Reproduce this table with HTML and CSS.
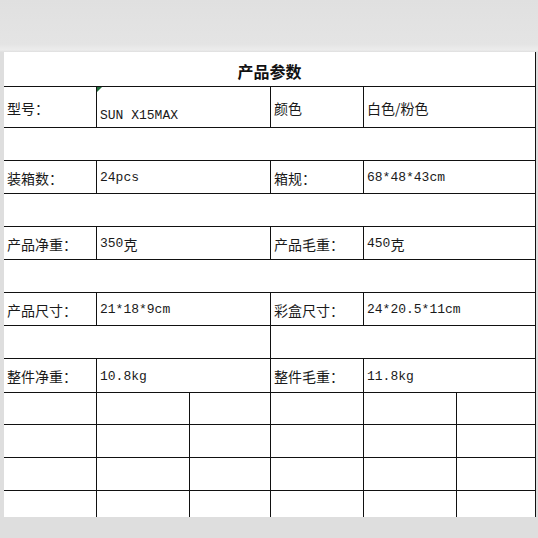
FILE: index.html
```html
<!DOCTYPE html>
<html lang="zh">
<head>
<meta charset="utf-8">
<title>产品参数</title>
<link rel="stylesheet" href="styles.css">
</head>
<body>
<div class="page">
  <div class="sheet">
    <div class="c title s6">产品参数</div>

    <div class="c">型号：</div>
    <div class="c s2 model"><span class="lat">SUN X15MAX</span></div>
    <div class="c">颜色</div>
    <div class="c s2">白色/粉色</div>

    <div class="c s6"></div>

    <div class="c">装箱数：</div>
    <div class="c s2"><span class="lat">24pcs</span></div>
    <div class="c">箱规：</div>
    <div class="c s2"><span class="lat">68*48*43cm</span></div>

    <div class="c s6"></div>

    <div class="c">产品净重：</div>
    <div class="c s2"><span class="lat">350</span>克</div>
    <div class="c">产品毛重：</div>
    <div class="c s2"><span class="lat">450</span>克</div>

    <div class="c s6"></div>

    <div class="c">产品尺寸：</div>
    <div class="c s2"><span class="lat">21*18*9cm</span></div>
    <div class="c">彩盒尺寸：</div>
    <div class="c s2"><span class="lat">24*20.5*11cm</span></div>

    <div class="c s3"></div>
    <div class="c s3"></div>

    <div class="c">整件净重：</div>
    <div class="c s2"><span class="lat">10.8kg</span></div>
    <div class="c">整件毛重：</div>
    <div class="c s2"><span class="lat">11.8kg</span></div>

    <div class="c"></div><div class="c"></div><div class="c"></div><div class="c"></div><div class="c"></div><div class="c"></div>
    <div class="c"></div><div class="c"></div><div class="c"></div><div class="c"></div><div class="c"></div><div class="c"></div>
    <div class="c"></div><div class="c"></div><div class="c"></div><div class="c"></div><div class="c"></div><div class="c"></div>
    <div class="c"></div><div class="c"></div><div class="c"></div><div class="c"></div><div class="c"></div><div class="c"></div>
  </div>
</div>
</body>
</html>
```

FILE: styles.css
```css
html, body {
  margin: 0;
  padding: 0;
}

body {
  width: 538px;
  height: 538px;
  overflow: hidden;
  background: #dedede;
  font-family: "Noto Sans CJK SC", "Liberation Mono", sans-serif;
  color: #1a1a1a;
}

.page {
  padding-top: 52px;
  background: linear-gradient(#e0e0e0 0, #e4e4e4 44px, #ececec 50px, #dedede 52px);
}

.sheet {
  margin-left: 4px;
  width: 531px;
  height: 465px;
  overflow: hidden;
  display: grid;
  grid-template-columns: 92px 92px 80px 92px 92px 78px;
  grid-template-rows: 34px 40px 32px 32px 32px 32px 32px 32px 32px 33px 31px 32px 32px 32px;
  gap: 1px;
  padding-right: 1px;
  background: #111;
}

.c {
  position: relative;
  background: #fff;
  display: flex;
  align-items: center;
  padding: 1px 3px 0;
  font-size: 14px;
  line-height: 1;
  white-space: nowrap;
  overflow: hidden;
}

.s2 { grid-column: span 2; }
.s3 { grid-column: span 3; }
.s6 { grid-column: span 6; }

.title {
  justify-content: center;
  font-weight: bold;
  font-size: 16px;
  padding-top: 3px;
  color: #111;
}

.lat {
  font-family: "Liberation Mono", monospace;
  font-size: 13px;
}

.model {
  align-items: flex-end;
  padding-bottom: 5px;
}

.model::before {
  content: "";
  position: absolute;
  left: 0;
  top: 0;
  width: 0;
  height: 0;
  border-top: 5px solid #1f6b3a;
  border-right: 5px solid transparent;
}
```
